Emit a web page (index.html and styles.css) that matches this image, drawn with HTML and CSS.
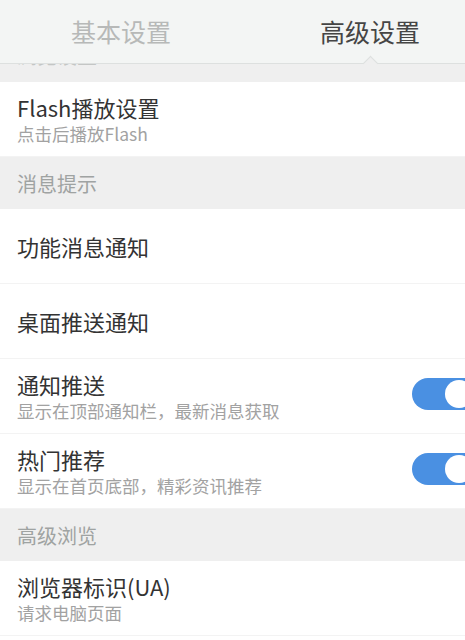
FILE: index.html
```html
<!DOCTYPE html>
<html>
  <head>
    <meta charset="UTF-8" />
    <title>高级设置</title>
    <link rel="stylesheet" href="styles.css">
  </head>
  <body>
    <div class="tabs">
      <div class="tab">基本设置</div>
      <div class="tab active">高级设置</div>
    </div>

    <div class="section clipped"><span>浏览设置</span></div>

    <div class="row">
      <div class="title">Flash播放设置</div>
      <div class="sub">点击后播放Flash</div>
    </div>

    <div class="section"><span>消息提示</span></div>

    <div class="row">
      <div class="title">功能消息通知</div>
    </div>
    <div class="row">
      <div class="title">桌面推送通知</div>
    </div>
    <div class="row">
      <div class="text">
        <div class="title">通知推送</div>
        <div class="sub">显示在顶部通知栏，最新消息获取</div>
      </div>
      <div class="switch on"><span class="knob"></span></div>
    </div>
    <div class="row">
      <div class="text">
        <div class="title">热门推荐</div>
        <div class="sub">显示在首页底部，精彩资讯推荐</div>
      </div>
      <div class="switch on"><span class="knob"></span></div>
    </div>

    <div class="section"><span>高级浏览</span></div>

    <div class="row">
      <div class="title">浏览器标识(UA)</div>
      <div class="sub">请求电脑页面</div>
    </div>
  </body>
</html>
```

FILE: styles.css
```css
* {
  box-sizing: border-box;
}
body {
  margin: 0;
  width: 465px;
  height: 640px;
  overflow: hidden;
  background: #fff;
  font-family: "Noto Sans CJK SC", "Noto Sans", sans-serif;
  color: #333;
}

/* top tabs */
.tabs {
  display: grid;
  grid-template-columns: 242px 256px;
  height: 64px;
  background: #f3f5f4;
  border-bottom: 1px solid #dde0df;
}
.tab {
  position: relative;
  display: flex;
  align-items: center;
  justify-content: center;
  font-size: 25px;
  color: #b7b9b8;
  padding-bottom: 2px;
}
.tab.active {
  color: #454545;
}
.tab.active::after {
  content: "";
  position: absolute;
  left: 50%;
  bottom: -1px;
  width: 10px;
  height: 10px;
  margin-left: -5px;
  margin-bottom: -5px;
  background: #efefef;
  border-left: 1px solid #dde0df;
  border-top: 1px solid #dde0df;
  transform: rotate(45deg);
}

/* group headers */
.section {
  display: flex;
  align-items: center;
  height: 52px;
  padding: 0 17px;
  background: #efefef;
  font-size: 20px;
  color: #9fa3a2;
}
.section.clipped {
  height: 18px;
  overflow: hidden;
  align-items: flex-end;
  color: #c4c6c5;
}
.section.clipped span {
  line-height: 26px;
  margin-bottom: 13px;
}

/* rows */
.row {
  display: flex;
  flex-direction: column;
  justify-content: center;
  height: 75px;
  padding: 0 17px;
  border-bottom: 1px solid #f3f3f3;
}
.row:has(.switch) {
  flex-direction: row;
  align-items: center;
  justify-content: space-between;
  padding-right: 0;
}
.title {
  font-size: 22px;
  line-height: 29px;
  color: #333;
}
.sub {
  font-size: 17.5px;
  line-height: 23px;
  color: #a2a2a2;
}

/* toggle switch, cut off at the right edge */
.switch {
  display: flex;
  align-items: center;
  width: 53px;
  height: 32px;
  margin-bottom: 4px;
  padding-left: 33px;
  border-radius: 16px 0 0 16px;
  background: #4a90e2;
  overflow: hidden;
}
.knob {
  flex: none;
  width: 28px;
  height: 28px;
  border-radius: 50%;
  background: #fff;
}
```
